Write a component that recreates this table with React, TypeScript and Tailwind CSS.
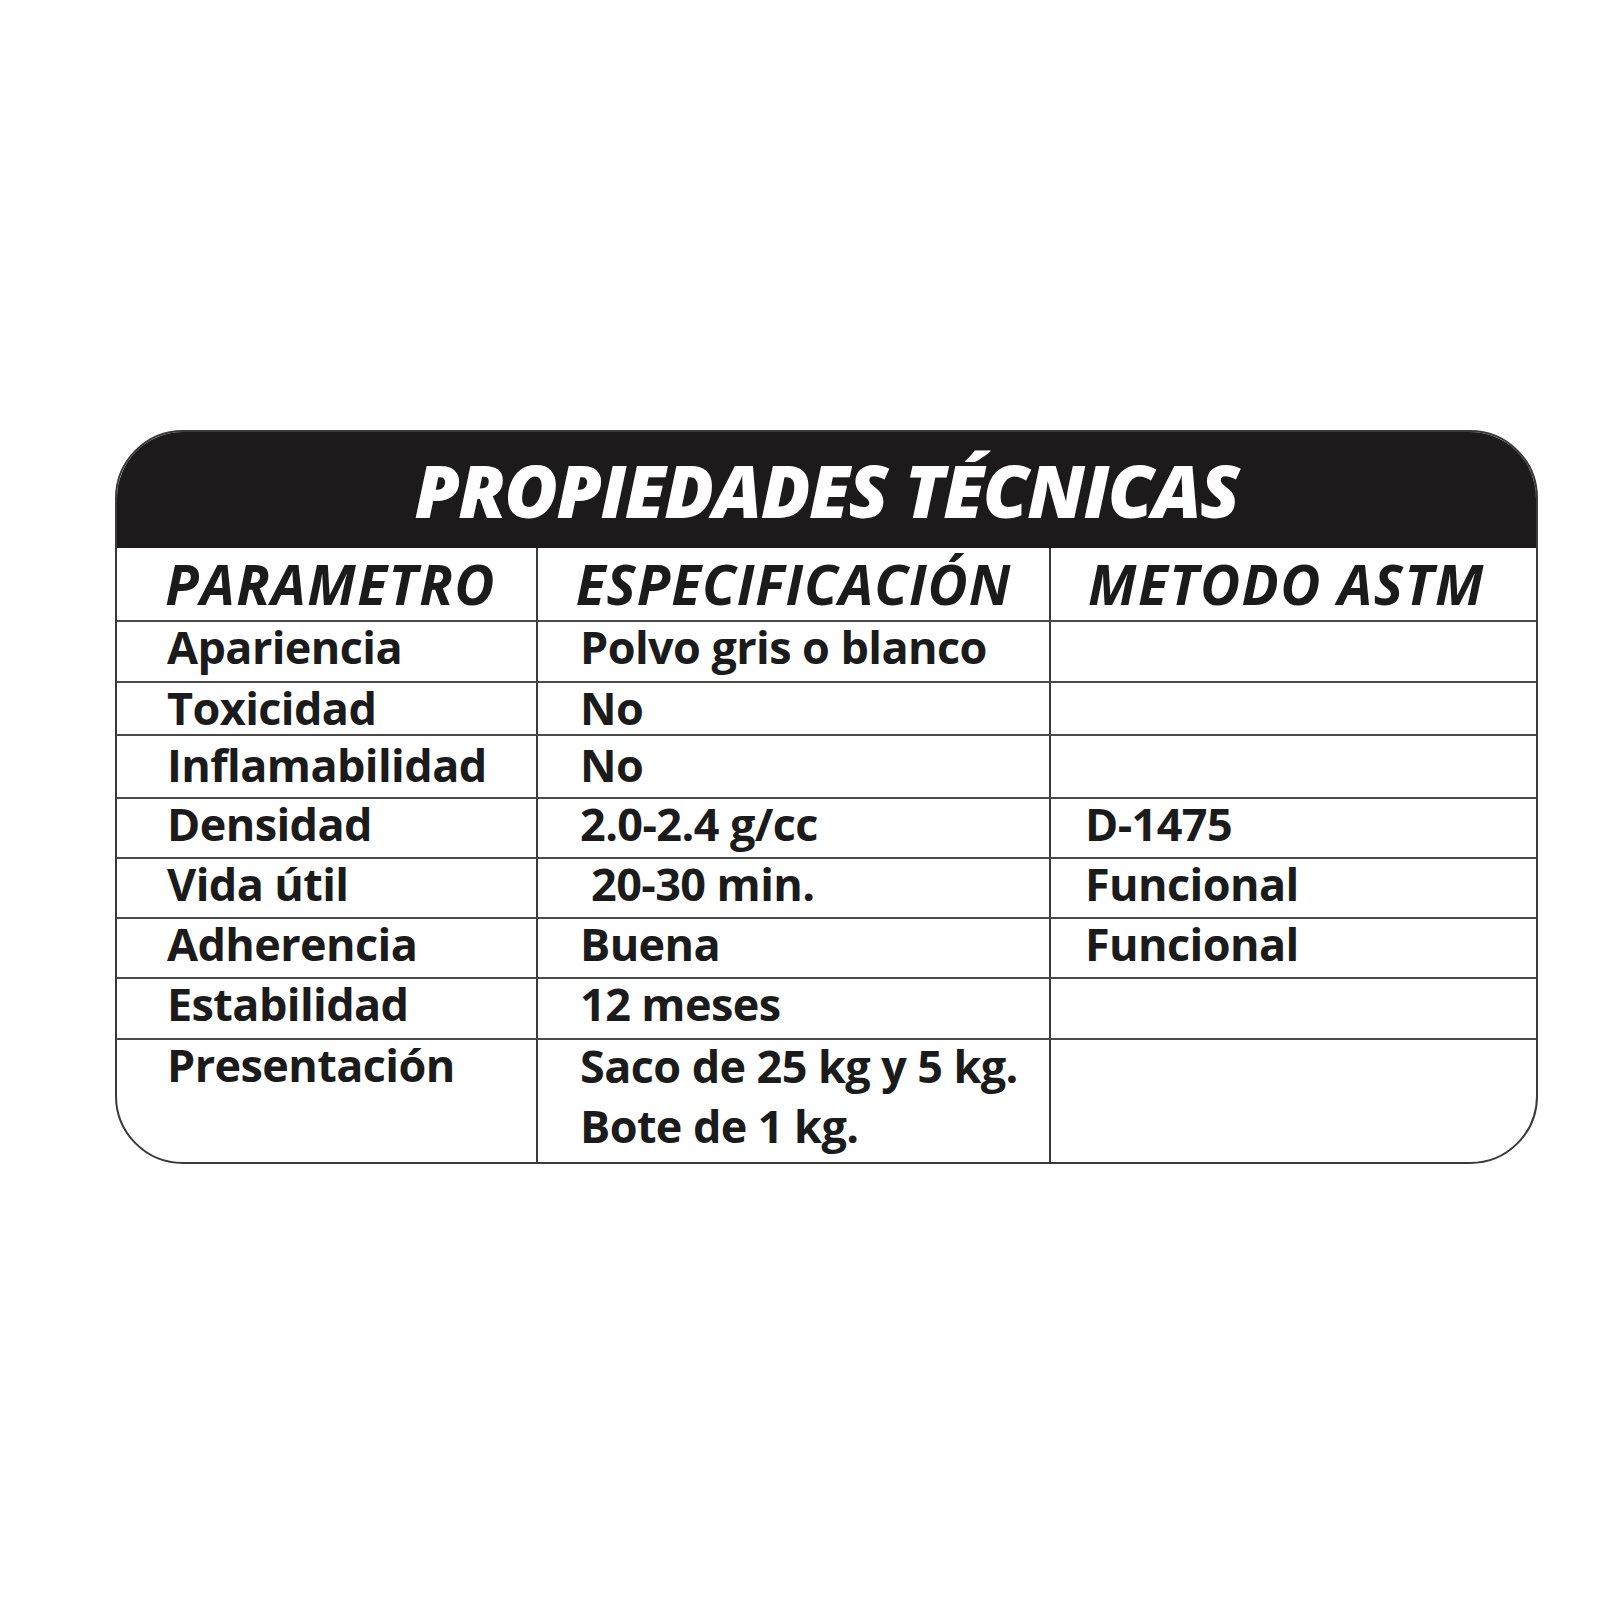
import React from "react";

// rows of the technical sheet: [parametro, especificación, método]
const rows: { name: string; spec: string[]; method: string; h: string; pt: string }[] = [
	{ name: "Apariencia", spec: ["Polvo gris o blanco"], method: "", h: "h-[61px]", pt: "pt-0" },
	{ name: "Toxicidad", spec: ["No"], method: "", h: "h-[53px]", pt: "pt-0" },
	{ name: "Inflamabilidad", spec: ["No"], method: "", h: "h-[63px]", pt: "pt-[4px]" },
	{ name: "Densidad", spec: ["2.0-2.4 g/cc"], method: "D-1475", h: "h-[60px]", pt: "pt-0" },
	{ name: "Vida útil", spec: ["\u00a020-30 min."], method: "Funcional", h: "h-[60px]", pt: "pt-0" },
	{ name: "Adherencia", spec: ["Buena"], method: "Funcional", h: "h-[60px]", pt: "pt-0" },
	{ name: "Estabilidad", spec: ["12 meses"], method: "", h: "h-[61px]", pt: "pt-0" },
	{ name: "Presentación", spec: ["Saco de 25 kg y 5 kg.", "Bote de 1 kg."], method: "", h: "h-[124px]", pt: "pt-0" },
];

export default function App() {
	return (
		<div className="w-[1600px] h-[1600px] bg-white pt-[430px] pl-[115px] font-['Open_Sans',sans-serif] text-[#1b1b1b]">
			<div className="w-[1423px] rounded-[68px] overflow-hidden border-2 border-[#3a3a3a] bg-white">
				{/* Title band */}
				<div className="h-[116px] bg-[#1c1a1a] flex justify-center">
					<h1 className="text-white italic font-extrabold text-[73px] leading-[116px] tracking-[-1.5px]">
						PROPIEDADES TÉCNICAS
					</h1>
				</div>

				{/* Column headers */}
				<div className="grid grid-cols-[419px_513px_1fr] h-[72px] italic font-bold text-[55px] leading-[72px] tracking-[1.5px]">
					<div className="flex justify-center pl-[8px]">PARAMETRO</div>
					<div className="flex justify-center border-l-2 border-[#3a3a3a] tracking-[1px]">ESPECIFICACIÓN</div>
					<div className="flex justify-center border-l-2 border-[#3a3a3a] pr-[14px]">METODO ASTM</div>
				</div>

				{/* Data rows */}
				{rows.map((row) => (
					<div
						key={row.name}
						className={`grid grid-cols-[419px_513px_1fr] border-t-2 border-[#4a4a4a] font-bold text-[45px] tracking-[-0.6px] ${row.h}`}
					>
						<div className={`pl-[50px] leading-[50px] ${row.pt}`}>{row.name}</div>
						<div className={`border-l-2 border-[#3a3a3a] pl-[42px] ${row.pt}`}>
							{row.spec.length > 1 ? (
								<div className="-mt-[4px]">
									{row.spec.map((line) => (
										<div key={line} className="leading-[60px]">
											{line}
										</div>
									))}
								</div>
							) : (
								<div className="leading-[50px]">{row.spec[0]}</div>
							)}
						</div>
						<div className={`border-l-2 border-[#3a3a3a] pl-[34px] leading-[50px] ${row.pt}`}>{row.method}</div>
					</div>
				))}
			</div>
		</div>
	);
}
